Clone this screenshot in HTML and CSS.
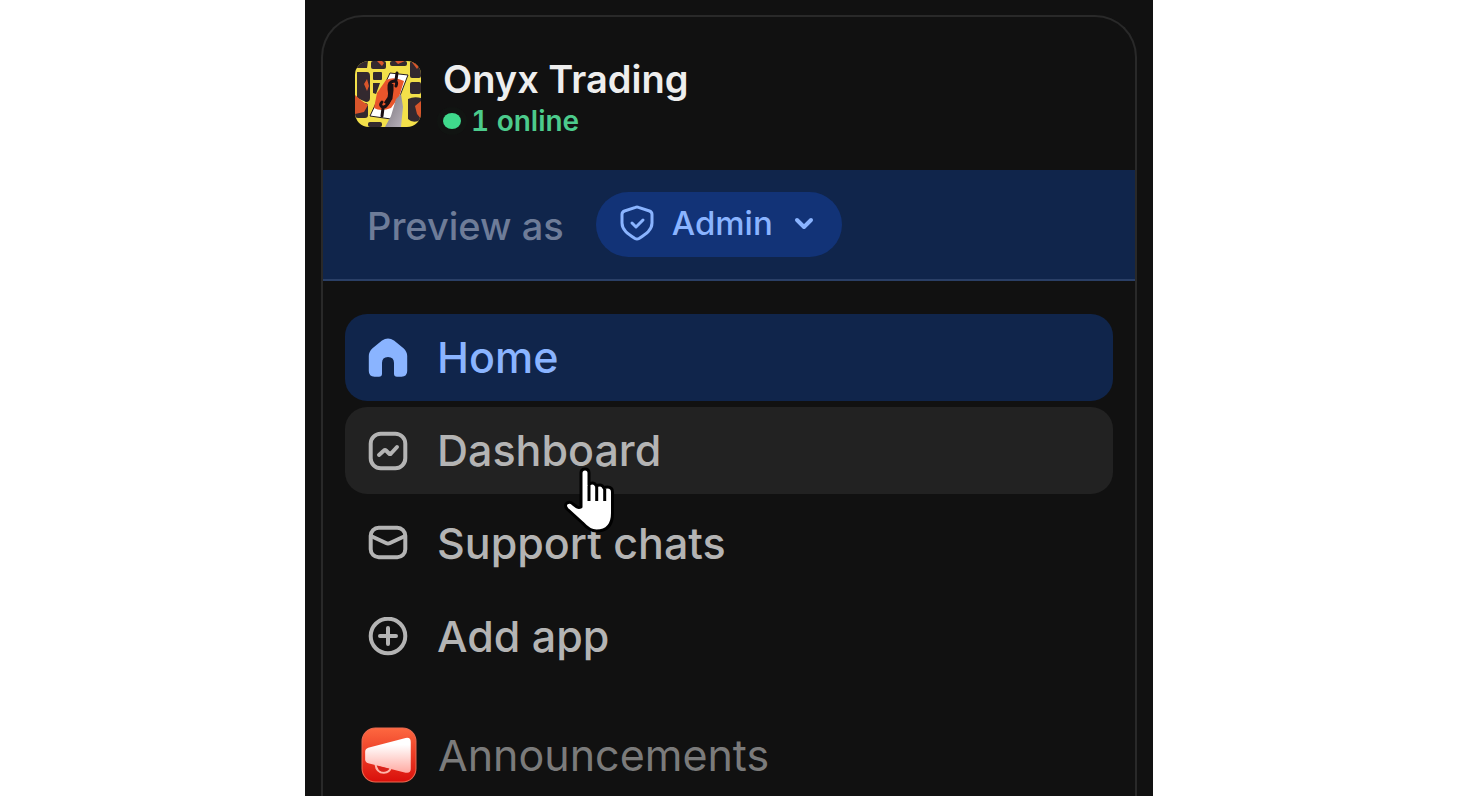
FILE: index.html
```
<!DOCTYPE html>
<html lang="en">
<head>
    <meta charset="UTF-8">
    <meta name="viewport" content="width=device-width, initial-scale=1.0">
    <title>Onyx Trading</title>
    <link rel="stylesheet" href="styles.css">
</head>
<body>
    <main class="stage">
        <div class="sidebar">
            <header class="header">
                <svg class="logo" viewBox="0 0 66 66" aria-hidden="true">
                    <defs>
                        <linearGradient id="hand" x1="0" y1="0" x2="1" y2="1">
                            <stop offset="0" stop-color="#77717a"/>
                            <stop offset="1" stop-color="#b9b3bb"/>
                        </linearGradient>
                    </defs>
                    <rect width="66" height="66" fill="#f3e04a"/>
                    <g fill="#33292f">
                        <path d="M0 0h13l-1 7H0z"/>
                        <rect x="16" y="0" width="15" height="8" rx="2"/>
                        <rect x="35" y="0" width="17" height="5" rx="2"/>
                        <rect x="55" y="0" width="11" height="17" rx="2"/>
                        <path d="M2 11h10q3 0 3 4v22q0 4-4 4l-9-4z"/>
                        <rect x="18" y="11" width="9" height="8" rx="1"/>
                        <path d="M18 22h7l-4 11-3-1z"/>
                        <rect x="55" y="21" width="11" height="12" rx="2"/>
                        <path d="M53 38q6-3 13-1v22q-8 4-13-1z"/>
                        <rect x="0" y="42" width="13" height="15" rx="3"/>
                        <rect x="13" y="61" width="14" height="5" rx="2"/>
                    </g>
                    <g fill="#d9552b">
                        <path d="M0 34l7 6 6 4-4 7-9 2z"/>
                        <path d="M60 45l6-5v18l-4-5z"/>
                        <path d="M22 0l5 5 2-3-2-2zM40 0l3 3 7-3zM56 0l8 5-2 3zM12 18l2 7-2 5-3-7z"/>
                    </g>
                    <path d="M35 12l18 2-17 44-21-3z" fill="#fff" stroke="#241c20" stroke-width="1"/>
                    <path d="M31 19q8-4 18 1l-5 16-8 11q-10 4-17 0l3-15z" fill="#e9552b"/>
                    <path d="M41 38l5-5 2 13-2 20H30l6-11z" fill="url(#hand)"/>
                    <path d="M41 25q2-5-2-5-6 1-5 8c1 8 2 12-3 17-4 3-7-1-4-4M42 12l-1 7M28 47l-1 8" fill="none" stroke="#1b1013" stroke-width="3" stroke-linecap="round"/>
                    <path d="M36 23v6l-1 8-4 6" fill="none" stroke="#1b1013" stroke-width="5"/>
                </svg>
                <div>
                    <h1 class="title">Onyx Trading</h1>
                    <p class="online"><span class="dot"></span>1 online</p>
                </div>
            </header>

            <div class="preview">
                <label class="preview-label" for="role">Preview as</label>
                <div class="pill">
                    <svg class="shield" viewBox="0 0 34 36" aria-hidden="true">
                        <path d="M15.500 2.300q1.500-.6 3 0l11 3.700q2.500 1 2.500 3.500V18c0 7-6 11-13 15.500q-2 1.200-4 0C8 29 2 25 2 18V9.500Q2 7 4.500 6z"/>
                        <path d="M12 18l4 4 7-7"/>
                    </svg>
                    <select class="role" id="role">
                        <option>Admin</option>
                    </select>
                    <svg class="chevron" viewBox="0 0 20 14" aria-hidden="true">
                        <path d="M3 4l7 7 7-7"/>
                    </svg>
                </div>
            </div>

            <nav class="nav">
                <a class="item active" href="#home">
                    <svg class="icon" viewBox="0 0 40 40" aria-hidden="true">
                        <path class="fill" d="M14 2.600Q20-1.400 26 2.600L35.500 10.200Q39.200 13.600 39.200 18v15q0 5.700-5.700 5.700h-4.500q-3 0-3-3V25q0-6-6-6t-6 6v10.700q0 3-3 3H6.500Q.8 38.700.8 33V18q0-4.400 3.700-7.800z"/>
                    </svg>
                    Home
                </a>
                <a class="item hover" href="#dashboard">
                    <svg class="icon" viewBox="0 0 40 40" aria-hidden="true">
                        <rect x="2.700" y="2.700" width="34.600" height="34.600" rx="10"/>
                        <path d="M11 24l5-4.500q1-1 2 0l3 3q1 1 2 0l6-6.500"/>
                    </svg>
                    Dashboard
                    <svg class="cursor" viewBox="0 0 50 66" aria-hidden="true">
                        <path d="M17 39V5q0-4 4-4t4 4v12q1-2 3.500-2t4 3q1-1 3.500-1t4 3q1-1 3.500-1 5 0 5 5v21q0 18-16 18-7 0-14-8L3 41q-3-4 0-6 3-2 6 1l4 3q2 1 4 0z"/>
                        <path class="gaps" d="M25 18v15M32.700 19v14M40.700 21v12"/>
                    </svg>
                </a>
                <a class="item" href="#support">
                    <svg class="icon" viewBox="0 0 40 40" aria-hidden="true">
                        <rect x="2.700" y="3.700" width="34.600" height="29.500" rx="8"/>
                        <path d="M4 12.500l14 6.500q2 1 4 0l14-6.500"/>
                    </svg>
                    Support chats
                </a>
                <a class="item" href="#add">
                    <svg class="icon" viewBox="0 0 40 40" aria-hidden="true">
                        <circle cx="20" cy="19" r="17.300"/>
                        <path d="M20 11v16M12 19h16"/>
                    </svg>
                    Add app
                </a>
            </nav>

            <nav class="nav apps">
                <a class="item muted" href="#announcements">
                    <svg class="app-icon" viewBox="0 0 54 54" aria-hidden="true">
                        <defs>
                            <linearGradient id="red" x1="0" y1="0" x2="0" y2="1">
                                <stop offset="0" stop-color="#fd6840"/>
                                <stop offset="1" stop-color="#d90f0b"/>
                            </linearGradient>
                            <linearGradient id="horn" x1="0" y1="0" x2="0" y2="1">
                                <stop offset="0.200" stop-color="#fff"/>
                                <stop offset="1" stop-color="#ffaaa2"/>
                            </linearGradient>
                        </defs>
                        <rect x="1" y="1" width="52" height="52" rx="13" fill="url(#red)" stroke="#ee6a50"/>
                        <path d="M14 36q1 8 8 8 6 0 7-6" fill="none" stroke="#ffb5aa" stroke-width="2"/>
                        <path d="M7 20L43 10.500q5-1 5 4V40q0 5-5 4L7 35q-3-1-3-4v-7q0-3 3-4z" fill="url(#horn)"/>
                        <path d="M16 37.500l11 2.700q-2 3-5 3-5 0-6-5.700z" fill="#d9221c"/>
                    </svg>
                    Announcements
                </a>
            </nav>
        </div>
    </main>
</body>
</html>
```

FILE: styles.css
```
* {
    box-sizing: border-box;
}
body {
    margin: 0;
    background: #fff;
    font-family: Inter, "Liberation Sans", sans-serif;
    font-weight: 500;
}
.stage {
    max-width: 848px;
    height: 100vh;
    margin: 0 auto;
    padding: 15px 16px 0;
    overflow: hidden;
    background: #111;
}
.sidebar {
    border: 2px solid #292929;
    border-bottom: 0;
    border-radius: 42px 42px 0 0;
}
.header {
    display: flex;
    align-items: flex-start;
    gap: 22px;
    padding: 44px 32px 25px;
}
.logo {
    width: 66px;
    height: 66px;
    border-radius: 14px;
}
.title {
    margin: 0;
    font-size: 38px;
    line-height: 36px;
    font-weight: 600;
    color: #eee;
}
.online {
    display: flex;
    align-items: center;
    gap: 10px;
    margin: 0;
    font-size: 28px;
    line-height: 48px;
    font-weight: 600;
    font-variant-numeric: tabular-nums;
    color: #4ccb8c;
}
.dot {
    width: 18px;
    height: 16px;
    border-radius: 50%;
    background: #3fd98c;
    box-shadow: 0 0 0 6px #11181480;
}

/* role preview bar */
.preview {
    display: flex;
    align-items: center;
    gap: 32px;
    padding: 22px 44px;
    background: #10254b;
    border-bottom: 2px solid #2a3f66;
}
.preview-label {
    padding-top: 3px;
    font-size: 38px;
    line-height: 48px;
    color: #6e7c98;
}
.pill {
    display: flex;
    align-items: center;
    gap: 18px;
    padding: 11px 28px 14px 24px;
    border-radius: 33px;
    background: #123377;
    color: #8ab4ff;
}
.role {
    padding: 0 2px 0 0;
    border: 0;
    appearance: none;
    background: none;
    color: inherit;
    font: inherit;
    font-size: 33px;
    line-height: 40px;
}
.shield {
    width: 34px;
    height: 36px;
}
.chevron {
    width: 20px;
    height: 14px;
}
.shield, .chevron, .icon {
    flex: none;
    fill: none;
    stroke: currentColor;
    stroke-width: 4;
    stroke-linecap: round;
    stroke-linejoin: round;
}
.shield {
    stroke-width: 3;
}

/* navigation */
.nav {
    display: flex;
    flex-direction: column;
    gap: 6px;
    padding: 33px 22px 0;
}
.item {
    position: relative;
    display: flex;
    align-items: center;
    gap: 29px;
    padding: 16px 23px;
    border-radius: 22px;
    font-size: 43px;
    line-height: 55px;
    color: #b4b4b4;
    text-decoration: none;
}
.active {
    background: #10254b;
    color: #8ab4ff;
}
.hover {
    z-index: 1;
    background: #222;
}
.icon {
    width: 40px;
    height: 40px;
}
.icon .fill {
    fill: currentColor;
    stroke: none;
}
.cursor {
    position: absolute;
    top: 61px;
    left: 219px;
    width: 50px;
    height: 66px;
    overflow: visible;
    fill: #fff;
    stroke: #000;
    stroke-width: 3;
    stroke-linejoin: round;
}
.apps {
    padding-top: 31px;
}
.apps .item {
    gap: 21px;
    padding: 16px;
}
.muted {
    font-weight: 400;
    color: #7b7b7b;
}
.app-icon {
    width: 56px;
    height: 56px;
}
```
